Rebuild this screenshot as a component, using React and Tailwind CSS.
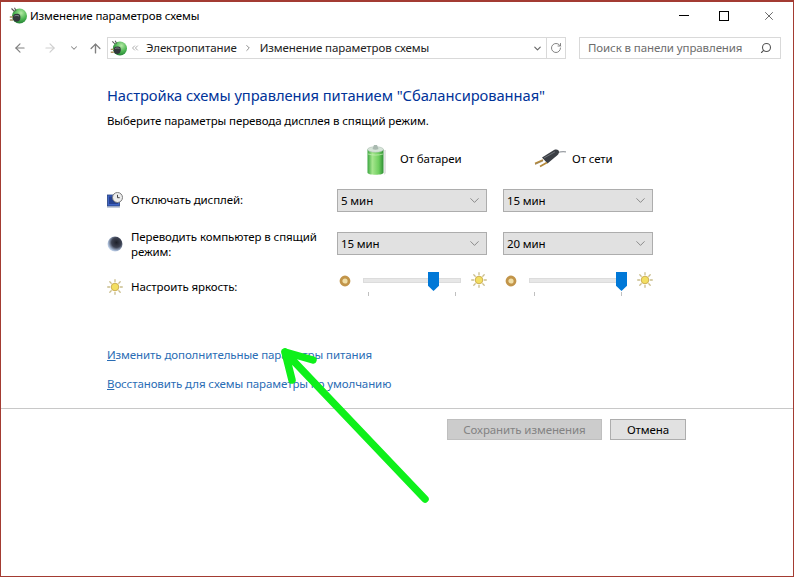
import { ChevronDown, ChevronRight, ChevronsLeft, ArrowLeft, ArrowRight, ArrowUp, RotateCw, Search, X } from 'lucide-react';

function PlanIcon({ id, size = 18 }) {
  return (
    <svg width={size} height={size} viewBox="0 0 18 18">
      <defs>
        <radialGradient id={id} cx="0.600" cy="0.300" r="0.750">
          <stop offset="0" stopColor="#b5eaa6" />
          <stop offset="0.550" stopColor="#4cb552" />
          <stop offset="1" stopColor="#1d7a30" />
        </radialGradient>
      </defs>
      <circle cx="10.500" cy="9" r="7.500" fill={`url(#${id})`} />
      <path d="M2.500 1.500l3 3M5.500 0.800l1.500 3" stroke="#555" strokeWidth="1.100" />
      <path d="M5 7.500c2-1 5-.8 6 .5 .8 2 .6 4.500-1 6-1.500 1-3.500 1-5 0-1.500-2-1.500-4.500 0-6.500z" fill="#33373c" />
      <path d="M5.500 9c1.300-.7 3-.7 4.500 0" stroke="#9a9fa5" strokeWidth="0.800" fill="none" />
      <path d="M4 10H0.800M4 13H0.800" stroke="#a99263" strokeWidth="1.400" />
    </svg>
  );
}

function BatteryIcon() {
  return (
    <svg width="19" height="31" viewBox="0 0 19 31">
      <defs>
        <linearGradient id="batt" x1="0" x2="1" y1="0" y2="0">
          <stop offset="0" stopColor="#3aa63f" />
          <stop offset="0.300" stopColor="#a6e68e" />
          <stop offset="0.700" stopColor="#6fcf5f" />
          <stop offset="1" stopColor="#2f8f35" />
        </linearGradient>
      </defs>
      <path d="M17 6h2v23l-2 2z" fill="#e3e3e3" />
      <path d="M0.500 5.500h16v23c0 1.500-3 2.200-8 2.200s-8-.7-8-2.200z" fill="url(#batt)" />
      <ellipse cx="8.500" cy="5.500" rx="8" ry="2.800" fill="#d6e4d8" stroke="#9fb5a6" strokeWidth="0.500" />
      <path d="M5.500 5l1.500-4h3l1.500 4c-1.500 .9-4.500 .9-6 0z" fill="#a9b9b0" />
      <path d="M1 10c4 1.400 11 1.400 15 0" stroke="#cdf2bd" strokeWidth="0.700" fill="none" />
    </svg>
  );
}

function PlugIcon() {
  return (
    <svg width="32" height="22" viewBox="0 0 32 22">
      <path d="M24 4.500c3-1 5-1 8-.6" stroke="#9a9ea3" strokeWidth="1.300" fill="none" />
      <path d="M8 9.500L20 2c2.500-1.200 5.500-.2 5 2.500-.5 2.500-3 3.500-5 5.500l-6.500 5.500z" fill="#3b3f45" />
      <path d="M10 10L21 3.800" stroke="#7d8187" strokeWidth="0.800" />
      <path d="M9 12L1 15.500M13 14.500L6 18.500" stroke="#b58a3c" strokeWidth="1.800" />
      <path d="M1 16.500l8-3.500" stroke="#6d5226" strokeWidth="0.500" />
    </svg>
  );
}

function DisplayIcon() {
  return (
    <svg width="16" height="16" viewBox="0 0 16 16">
      <rect x="0.500" y="3" width="12" height="11" fill="#3f63c4" stroke="#23407f" strokeWidth="0.800" />
      <rect x="2" y="4.500" width="9" height="7.500" fill="#26418f" />
      <path d="M0 14.500h13v1H0z" fill="#8b9bb8" />
      <circle cx="10.500" cy="5.500" r="5" fill="#ececec" stroke="#7c7c7c" strokeWidth="1" />
      <path d="M10.500 2.800v2.900h2.200" stroke="#333" strokeWidth="0.900" fill="none" />
    </svg>
  );
}

function SleepIcon() {
  return (
    <svg width="16" height="16" viewBox="0 0 16 16">
      <defs>
        <radialGradient id="moon" cx="0.600" cy="0.400" r="0.650">
          <stop offset="0" stopColor="#1d2029" />
          <stop offset="0.500" stopColor="#3d4252" />
          <stop offset="0.850" stopColor="#a9bbd6" />
          <stop offset="1" stopColor="#d5e2f2" />
        </radialGradient>
      </defs>
      <circle cx="8" cy="8" r="7.500" fill="url(#moon)" />
    </svg>
  );
}

function SunIcon({ size = 16 }) {
  return (
    <svg width={size} height={size} viewBox="0 0 16 16">
      <g stroke="#c9bd8c" strokeWidth="1.300" strokeLinecap="round">
        <path d="M8 0.700v2M8 13.300v2M0.700 8h2M13.300 8h2M2.800 2.800l1.400 1.400M11.800 11.800l1.400 1.400M2.800 13.200l1.400-1.400M11.800 4.200l1.400-1.400" />
      </g>
      <circle cx="8" cy="8" r="3.800" fill="#f3df62" stroke="#c8a84a" strokeWidth="0.900" />
    </svg>
  );
}

function DimIcon() {
  return (
    <svg width="12" height="12" viewBox="0 0 12 12">
      <circle cx="6" cy="6" r="4" fill="#f0dfa8" stroke="#c2954a" strokeWidth="2.800" />
    </svg>
  );
}

function Dropdown({ value }) {
  return (
    <div className="flex h-[23px] w-[150px] items-center justify-between border border-[#adadad] bg-[#e1e1e1] pl-[3px] pr-[4px] text-[11.5px] text-black">
      <span>{value}</span>
      <ChevronDown className="h-[15px] w-[15px] text-[#555]" strokeWidth={1} />
    </div>
  );
}

function Brightness({ thumbClass, tickClass }) {
  return (
    <div className="flex h-[30px] w-[150px] items-start">
      <div className="mt-[5px] ml-[2px] w-[12px]">
        <DimIcon />
      </div>
      <div className="relative ml-[12px] mt-[8px] h-[5px] w-[98px] border border-[#dcdcdc] bg-[#e7e7e7]">
        <div className={`absolute top-[-7px] h-[19px] w-[11px] bg-[#0078d7] [clip-path:polygon(0_0,100%_0,100%_72%,50%_100%,0_72%)] ${thumbClass}`} />
        <div className="absolute left-[4px] top-[13px] h-[4px] w-px bg-[#c0c0c0]" />
        <div className={`absolute top-[13px] h-[4px] w-px bg-[#c0c0c0] ${tickClass}`} />
      </div>
      <div className="ml-[10px] mt-[2px]">
        <SunIcon size={16} />
      </div>
    </div>
  );
}

function SettingLabel({ icon, children, className }) {
  return (
    <div className={`flex items-start gap-[8px] text-[11.5px] leading-[15px] text-black ${className}`}>
      <div className="shrink-0">{icon}</div>
      <div>{children}</div>
    </div>
  );
}

export default function App() {
  return (
    <div className="relative flex h-[577px] w-[794px] flex-col overflow-hidden border border-t-2 border-[#a33b32] bg-white font-['Noto_Sans','Open_Sans',sans-serif]">
      <div className="flex h-[27px] shrink-0 items-center pl-[8px]">
        <PlanIcon id="plan-title" />
        <span className="ml-[3px] text-[11.5px] tracking-[-0.1px] text-black">Изменение параметров схемы</span>
        <div className="ml-auto flex items-center pr-[17px] text-black">
          <div className="h-px w-[10px] bg-black" />
          <div className="ml-[30px] h-[10px] w-[10px] border border-black" />
          <X className="ml-[33px] h-[14px] w-[14px]" strokeWidth={1} />
        </div>
      </div>

      <div className="mt-[8px] flex h-[22px] shrink-0 items-center pl-[12px] text-[#7e7e7e]">
        <ArrowLeft className="h-[14px] w-[14px] text-[#808080]" strokeWidth={2} />
        <ArrowRight className="ml-[16px] h-[14px] w-[14px] text-[#cfcfcf]" strokeWidth={2} />
        <ChevronDown className="ml-[12px] h-[10px] w-[10px] text-[#8a8a8a]" strokeWidth={2.500} />
        <ArrowUp className="ml-[9px] h-[15px] w-[15px] text-[#808080]" strokeWidth={2.200} />
        <div className="ml-[4px] flex h-[22px] w-[459px] items-center border border-[#d9d9d9] pl-[2px] text-[11.5px] tracking-[-0.1px] text-[#222]">
          <PlanIcon id="plan-address" size={17} />
          <ChevronsLeft className="ml-[3px] h-[10px] w-[10px] text-[#777]" strokeWidth={1.500} />
          <span className="ml-[6px]">Электропитание</span>
          <ChevronRight className="ml-[6px] h-[10px] w-[10px] text-[#777]" strokeWidth={2} />
          <span className="ml-[7px]">Изменение параметров схемы</span>
          <ChevronDown className="ml-auto h-[11px] w-[11px] text-[#666]" strokeWidth={2.500} />
          <div className="ml-[3px] h-full w-px bg-[#d9d9d9]" />
          <RotateCw className="mx-[3px] h-[12px] w-[12px] text-[#777]" strokeWidth={1.800} />
        </div>
        <div className="ml-[13px] flex h-[22px] w-[202px] items-center justify-between border border-[#d9d9d9] pl-[8px] pr-[8px] text-[11.5px] tracking-[-0.1px] text-[#6d6d6d]">
          <span>Поиск в панели управления</span>
          <Search className="h-[12px] w-[12px] -scale-x-100 text-[#555]" strokeWidth={2.200} />
        </div>
      </div>

      <div className="flex flex-col pl-[106px]">
        <h1 className="mt-[26px] text-[14.7px] font-normal leading-[20px] tracking-[-0.05px] text-[#003399]">
          Настройка схемы управления питанием "Сбалансированная"
        </h1>
        <p className="mt-[8px] text-[11.5px] leading-[16px] tracking-[-0.1px] text-black">
          Выберите параметры перевода дисплея в спящий режим.
        </p>

        <div className="mt-[14px] grid grid-cols-[214px_150px_150px] gap-x-[16px] text-[11.5px] tracking-[-0.1px]">
          <div />
          <div className="flex h-[32px] items-center pl-[30px]">
            <BatteryIcon />
            <span className="ml-[14px]">От батареи</span>
          </div>
          <div className="flex h-[32px] items-center pl-[31px]">
            <PlugIcon />
            <span className="ml-[6px]">От сети</span>
          </div>

          <SettingLabel icon={<DisplayIcon />} className="mt-[14px] h-[28px] pt-[3px]">Отключать дисплей:</SettingLabel>
          <div className="mt-[14px]"><Dropdown value="5 мин" /></div>
          <div className="mt-[14px]"><Dropdown value="15 мин" /></div>

          <SettingLabel icon={<SleepIcon />} className="mt-[15px] h-[40px] pt-[4px]">
            <span className="relative top-[-7px] block leading-[15px]">Переводить компьютер в спящий режим:</span>
          </SettingLabel>
          <div className="mt-[15px]"><Dropdown value="15 мин" /></div>
          <div className="mt-[15px]"><Dropdown value="20 мин" /></div>

          <SettingLabel icon={<SunIcon />} className="mt-[-2px] pt-[9px]">Настроить яркость:</SettingLabel>
          <div className="mt-[-2px]"><Brightness thumbClass="left-[64px]" tickClass="left-[91px]" /></div>
          <div className="mt-[-2px]"><Brightness thumbClass="left-[86px]" tickClass="left-[91px]" /></div>
        </div>

        <div className="mt-[47px] flex flex-col gap-[13px] text-[11.5px] leading-[16px] tracking-[-0.1px] text-[#2a6db5]">
          <a><span className="underline">И</span>зменить дополнительные параметры питания</a>
          <a><span className="underline">В</span>осстановить для схемы параметры по умолчанию</a>
        </div>
      </div>

      <div className="mt-[16px] h-px w-full bg-[#c8c8c8]" />

      <div className="mt-[10px] flex justify-end gap-[8px] pr-[107px] text-[11.5px] tracking-[-0.1px]">
        <button className="h-[21px] w-[155px] border border-[#bfbfbf] bg-[#cccccc] text-[#838383]">Сохранить изменения</button>
        <button className="h-[21px] w-[76px] border border-[#adadad] bg-[#e1e1e1] text-black">Отмена</button>
      </div>

      <svg className="absolute left-[-1px] top-[-2px]" width="794" height="577" viewBox="0 0 794 577" fill="none">
        <path d="M425 499L285 352M285 352L313 360M285 352L292 380" stroke="#0ef01a" strokeWidth="7.500" strokeLinecap="round" strokeLinejoin="round" />
      </svg>
    </div>
  );
}
